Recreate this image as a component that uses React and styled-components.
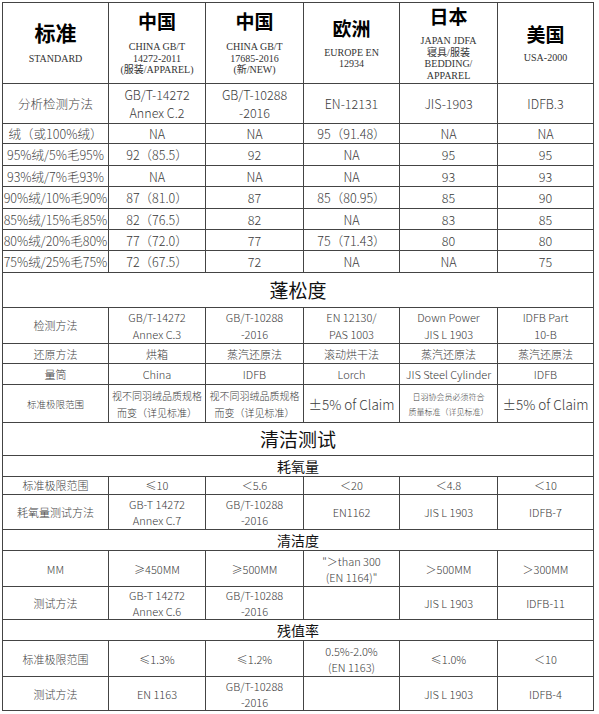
import React from "react";
import styled, { createGlobalStyle } from "styled-components";

const GlobalStyle = createGlobalStyle`
  html, body {
    margin: 0;
    padding: 0;
    background: #ffffff;
  }
  body {
    font-family: "Noto Sans CJK SC", "Noto Sans", sans-serif;
    color: #333;
  }
`;

const Page = styled.div`
  width: 599px;
  height: 714px;
  padding: 2px 0 0 2px;
  box-sizing: border-box;
  overflow: hidden;
`;

const Table = styled.table`
  border-collapse: collapse;
  table-layout: fixed;
  width: 592px;
  border: 1px solid #555;
`;

const Col = styled.col`
  width: ${(p) => p.$w}px;
`;

const Row = styled.tr`
  height: ${(p) => p.$h}px;
  & > td {
    border-top-color: ${(p) => (p.$soft ? "#a8a8a8" : "#444")};
  }
`;

const Cell = styled.td`
  border: 1px solid #444;
  padding: 0;
  text-align: center;
  vertical-align: middle;
  font-size: ${(p) => p.$size || 12}px;
  font-weight: 300;
  line-height: ${(p) => p.$lh || 18}px;
  color: #3a3a3a;
  white-space: nowrap;
  overflow: hidden;
`;

const Label = styled(Cell)`
  color: #444;
`;

const HeadCell = styled.td`
  border: 1px solid #444;
  padding: 0;
  text-align: center;
  vertical-align: middle;
`;

const HeadTitle = styled.div`
  font-size: ${(p) => p.$size || 19}px;
  font-weight: 700;
  line-height: 22px;
  color: #000;
  margin-bottom: ${(p) => p.$gap}px;
`;

const HeadSub = styled.div`
  font-family: "Liberation Serif", "Noto Sans CJK SC", serif;
  font-size: 10px;
  line-height: 11.5px;
  color: #333;
`;

const SectionCell = styled.td`
  border: 1px solid #444;
  border-top-color: ${(p) => (p.$soft ? "#a8a8a8" : "#444")};
  padding: 0;
  text-align: center;
  vertical-align: middle;
  color: #111;
  font-size: ${(p) => (p.$big ? 19 : 14)}px;
  line-height: 20px;
`;

const Line = styled.div``;

const countries = [
  { name: "中国", gap: 9, lines: ["CHINA GB/T", "14272-2011", "(服装/APPAREL)"] },
  { name: "中国", gap: 9, lines: ["CHINA GB/T", "17685-2016", "(新/NEW)"] },
  { name: "欧洲", gap: 8, lines: ["EUROPE EN", "12934"] },
  { name: "日本", gap: 8, lines: ["JAPAN JDFA", "寝具/服装", "BEDDING/", "APPAREL"] },
  { name: "美国", gap: 7, lines: ["USA-2000"] },
];

const fillWeight = [
  { h: 20, cells: ["绒（或100%绒）", "NA", "NA", "95（91.48）", "NA", "NA"] },
  { h: 22, cells: ["95%绒/5%毛95%", "92（85.5）", "92", "NA", "95", "95"] },
  { h: 21, soft: true, cells: ["93%绒/7%毛93%", "NA", "NA", "NA", "93", "93"] },
  { h: 22, cells: ["90%绒/10%毛90%", "87（81.0）", "87", "85（80.95）", "85", "90"] },
  { h: 21, soft: true, cells: ["85%绒/15%毛85%", "82（76.5）", "82", "NA", "83", "85"] },
  { h: 21, cells: ["80%绒/20%毛80%", "77（72.0）", "77", "75（71.43）", "80", "80"] },
  { h: 22, soft: true, cells: ["75%绒/25%毛75%", "72（67.5）", "72", "NA", "NA", "75"] },
];

const loft = [
  {
    h: 36,
    lh: 17,
    cells: [
      "检测方法",
      ["GB/T-14272", "Annex C.3"],
      ["GB/T-10288", "-2016"],
      ["EN 12130/", "PAS 1003"],
      ["Down Power", "JIS L 1903"],
      ["IDFB Part", "10-B"],
    ],
  },
  { h: 20, lh: 16, cells: ["还原方法", "烘箱", "蒸汽还原法", "滚动烘干法", "蒸汽还原法", "蒸汽还原法"] },
  { h: 21, lh: 16, cells: ["量筒", "China", "IDFB", "Lorch", "JIS Steel Cylinder", "IDFB"] },
  {
    h: 38,
    cells: [
      { lines: ["标准极限范围"], size: 9.5 },
      { lines: ["视不同羽绒品质规格", "而变（详见标准）"], size: 10, lh: 17 },
      { lines: ["视不同羽绒品质规格", "而变（详见标准）"], size: 10, lh: 17 },
      { lines: ["±5% of Claim"], size: 13.5 },
      { lines: ["日羽协会员必须符合", "质量标准（详见标准）"], size: 8, lh: 15 },
      { lines: ["±5% of Claim"], size: 13.5 },
    ],
  },
];

const cleanSections = [
  {
    title: "耗氧量",
    soft: true,
    rows: [
      { h: 18, lh: 15, cells: ["标准极限范围", "≤10", "＜5.6", "＜20", "＜4.8", "＜10"] },
      {
        h: 35,
        cells: [
          "耗氧量测试方法",
          ["GB-T 14272", "Annex C.7"],
          ["GB/T-10288", "-2016"],
          "EN1162",
          "JIS L 1903",
          "IDFB-7",
        ],
      },
    ],
  },
  {
    title: "清洁度",
    rows: [
      {
        h: 36,
        cells: ["MM", "≥450MM", "≥500MM", ['"＞than 300', '(EN 1164)"'], "＞500MM", "＞300MM"],
      },
      {
        h: 33,
        cells: [
          "测试方法",
          ["GB-T 14272", "Annex C.6"],
          ["GB/T-10288", "-2016"],
          "",
          "JIS L 1903",
          "IDFB-11",
        ],
      },
    ],
  },
  {
    title: "残值率",
    rows: [
      {
        h: 36,
        cells: ["标准极限范围", "≤1.3%", "≤1.2%", ["0.5%-2.0%", "(EN 1163)"], "≤1.0%", "＜10"],
      },
      {
        h: 34,
        cells: ["测试方法", "EN 1163", ["GB/T-10288", "-2016"], "", "JIS L 1903", "IDFB-4"],
      },
    ],
  },
];

const widths = [106, 97, 98, 96, 98, 96];

// a cell spec is a string, a list of lines, or { lines, size, lh }
const renderCell = (spec, i, size, lh) => {
  let lines = spec;
  let s = size;
  let l = lh;
  if (typeof spec === "string") lines = [spec];
  else if (!Array.isArray(spec)) {
    lines = spec.lines;
    s = spec.size || size;
    l = spec.lh || lh;
  }
  const Comp = i === 0 ? Label : Cell;
  return (
    <Comp key={i} $size={s} $lh={l}>
      {lines.map((t, k) => (
        <Line key={k}>{t}</Line>
      ))}
    </Comp>
  );
};

const DataRow = ({ row, size, lh }) => (
  <Row $h={row.h} $soft={row.soft}>
    {row.cells.map((c, i) => renderCell(c, i, size, row.lh || lh))}
  </Row>
);

const SectionRow = ({ title, h, big, soft }) => (
  <Row $h={h}>
    <SectionCell colSpan={6} $big={big} $soft={soft}>
      {title}
    </SectionCell>
  </Row>
);

const App = () => {
  return (
    <Page>
      <GlobalStyle />
      <Table>
        <colgroup>
          {widths.map((w, i) => (
            <Col key={i} $w={w} />
          ))}
        </colgroup>
        <tbody>
          <Row $h={81}>
            <HeadCell>
              <HeadTitle $gap={10} $size={21}>标准</HeadTitle>
              <HeadSub>STANDARD</HeadSub>
            </HeadCell>
            {countries.map((c, i) => (
              <HeadCell key={i}>
                <HeadTitle $gap={c.gap}>{c.name}</HeadTitle>
                {c.lines.map((t, k) => (
                  <HeadSub key={k}>{t}</HeadSub>
                ))}
              </HeadCell>
            ))}
          </Row>
          <DataRow
            size={12.5}
            row={{
              h: 40,
              cells: [
                "分析检测方法",
                ["GB/T-14272", "Annex C.2"],
                ["GB/T-10288", "-2016"],
                "EN-12131",
                "JIS-1903",
                "IDFB.3",
              ],
            }}
          />
          {fillWeight.map((r, i) => (
            <DataRow key={i} row={r} size={12.5} lh={17} />
          ))}
          <SectionRow title="蓬松度" h={35} big />
          {loft.map((r, i) => (
            <DataRow key={i} row={r} size={11} />
          ))}
          <SectionRow title="清洁测试" h={33} big />
          {cleanSections.map((sec) => (
            <React.Fragment key={sec.title}>
              <SectionRow title={sec.title} h={21} soft={sec.soft} />
              {sec.rows.map((r, i) => (
                <DataRow key={i} row={r} size={11} lh={16} />
              ))}
            </React.Fragment>
          ))}
        </tbody>
      </Table>
    </Page>
  );
};

export default App;
